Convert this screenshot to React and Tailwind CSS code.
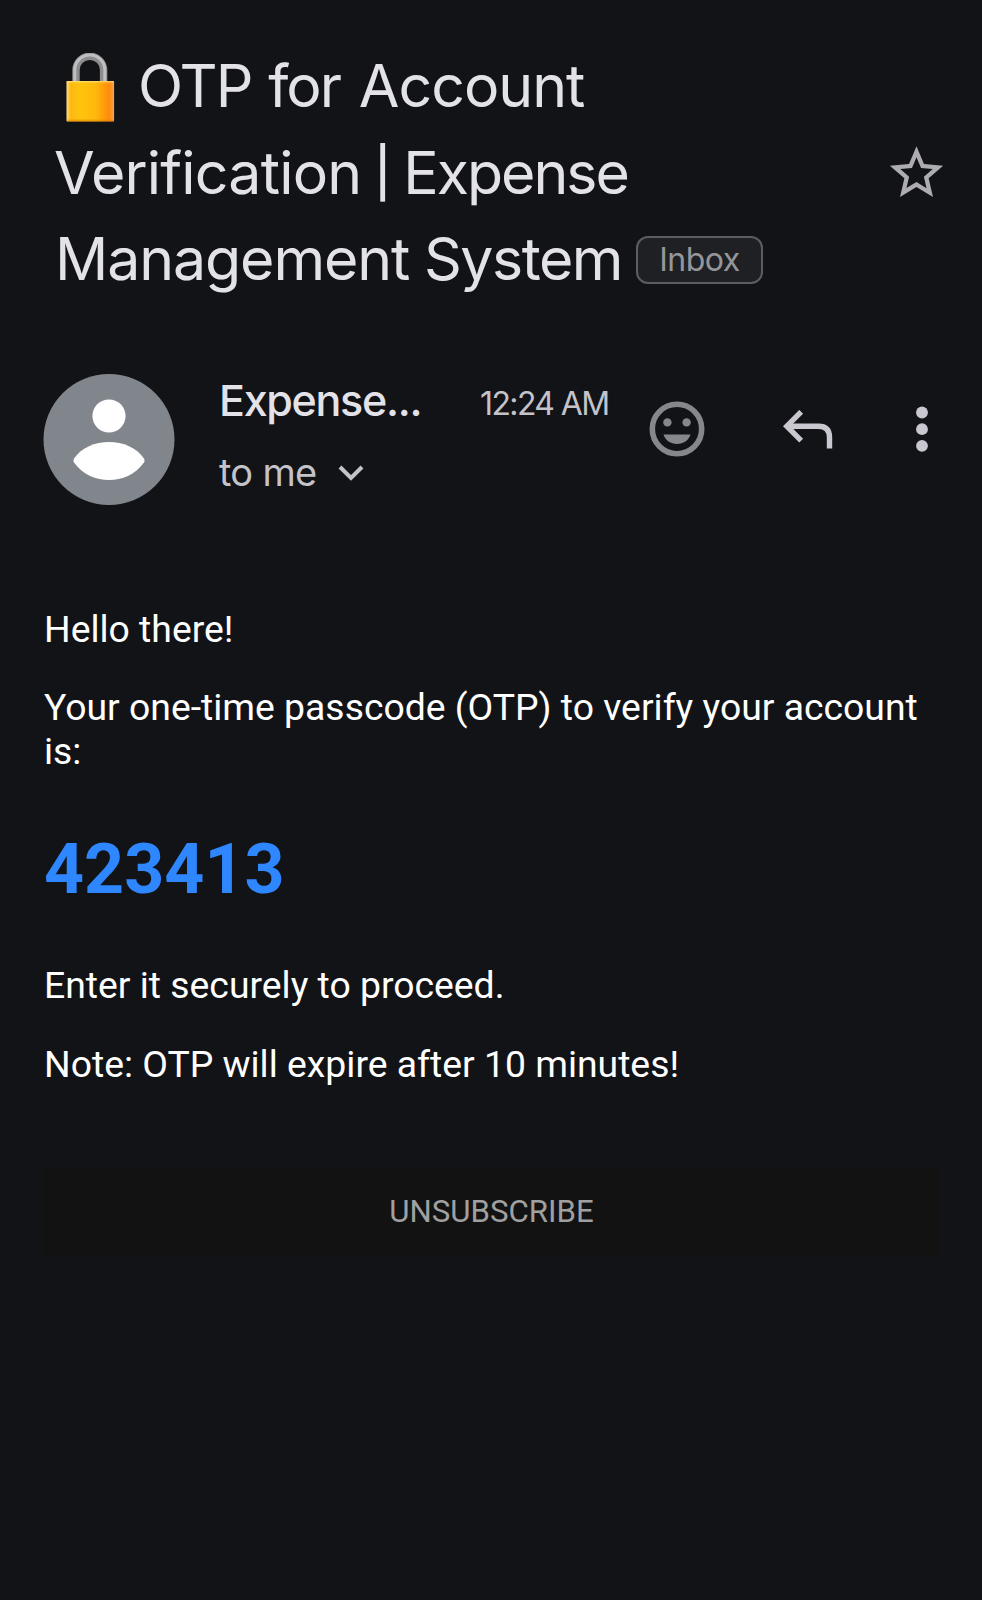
const SANS = "font-['Inter','Roboto',sans-serif]";

function Lock() {
  return (
    <svg className="ml-[10px] mt-[9.500px] h-[70px] w-[49px] shrink-0" viewBox="0 0 49 70">
      <defs>
        <linearGradient id="lockBody" x1="0" x2="1" y1="0" y2="0">
          <stop offset="0" stopColor="#ffe08a" />
          <stop offset="0.08" stopColor="#fcb912" />
          <stop offset="0.3" stopColor="#ffc40d" />
          <stop offset="0.62" stopColor="#ffb80c" />
          <stop offset="0.9" stopColor="#ff8a0a" />
          <stop offset="1" stopColor="#f3a456" />
        </linearGradient>
        <linearGradient id="lockShade" x1="0" x2="0" y1="0" y2="1">
          <stop offset="0" stopColor="#fff0a0" stopOpacity="0.7" />
          <stop offset="0.07" stopColor="#ffd54a" stopOpacity="0" />
          <stop offset="0.92" stopColor="#f08a00" stopOpacity="0" />
          <stop offset="1" stopColor="#c96a00" stopOpacity="0.6" />
        </linearGradient>
      </defs>
      <path d="M10 30V17a13.8 13.8 0 0 1 27.6 0V30" fill="none" stroke="#8d8d8f" strokeWidth="7.4" />
      <path d="M8.8 30V17a15 15 0 0 1 30 0V30" fill="none" stroke="#bfbfc1" strokeWidth="3" />
      <rect x="0.5" y="28" width="47.6" height="40.6" rx="1" fill="url(#lockBody)" />
      <rect x="0.5" y="28" width="47.6" height="40.6" rx="1" fill="url(#lockShade)" />
    </svg>
  );
}

function Subject() {
  return (
    <header className={`flex pt-[43px] pl-[56px] ${SANS}`}>
      <h1 className="flex w-[828px] flex-col text-[59px] leading-[86.5px] whitespace-nowrap text-[#e3e2e8]">
        <span className="flex h-[86.5px]">
          <Lock />
          <span className="ml-[23px] tracking-[-1.9px]">
            OTP <span className="ml-[2px]">for</span> <span className="ml-[4px] tracking-[-1px]">Account</span>
          </span>
        </span>
        <span className="-ml-[2px] flex h-[86.5px] tracking-[-2px]">
          <span className="tracking-[-0.8px]">Verification</span>
          <span className="ml-[13px] h-[86.5px] w-[14px] text-center text-[49px] font-medium tracking-normal">|</span>
          <span className="ml-[15px]">Expense</span>
        </span>
        <span className="flex h-[86.5px] items-center">
          <span className="-ml-px w-[369px] tracking-[-1.1px]">Management</span>
          <span className="w-[212px] tracking-[-1.5px]">System</span>
          <span className="mt-[2px] flex h-[48px] w-[127px] items-center justify-center rounded-[12px] border-[2.5px] border-[#5c5d61] bg-[#1f2024] text-[32px] leading-none tracking-[-0.5px] text-[#95969a]">
            Inbox
          </span>
        </span>
      </h1>
      <svg className="mt-[98px] h-[64px] w-[65px]" viewBox="0 0 24 24" fill="#adadb1">
        <path d="M22 9.24l-7.19-.62L12 2 9.19 8.63 2 9.24l5.46 4.73L5.82 21 12 17.27 18.18 21l-1.63-7.03L22 9.24zM12 15.4l-3.76 2.27 1-4.28-3.32-2.88 4.38-.38L12 6.1l1.71 4.04 4.38.38-3.32 2.88 1 4.28L12 15.4z" />
      </svg>
    </header>
  );
}

function Sender() {
  return (
    <section className={`mt-[71.5px] flex h-[132px] pl-[43px] ${SANS}`}>
      <svg className="h-[132px] w-[132px] shrink-0" viewBox="0 0 132 132">
        <circle cx="66" cy="65.5" r="65.5" fill="#81858c" />
        <circle cx="66" cy="42" r="16.6" fill="#fff" />
        <path d="M31 84.500C38.500 73.500 52 68 66 68s27.500 5.500 35 16.500q1 2 0 4C92 101 79 106 66 106s-26-5-35-17.500q-1-2 0-4z" fill="#fff" />
      </svg>
      <div className="ml-[44px] w-[262px] whitespace-nowrap">
        <div className="h-[52px] text-[43px] leading-[52px] font-medium tracking-[-1.3px] text-[#e3e2e8]">Expense...</div>
        <div className="mt-[23px] flex h-[46px] items-center text-[38px] leading-[46px] text-[#c3c3c9]">
          <span className="w-[119px] tracking-[-0.7px]">to me</span>
          <svg className="mt-[2px] h-[18px] w-[26px]" viewBox="0 0 26 18" fill="none" stroke="#c3c3c9" strokeWidth="4">
            <path d="M2 3l11 11L24 3" />
          </svg>
        </div>
      </div>
      <div className="-ml-px mt-[10px] w-[169px] text-[32px] leading-[40px] tracking-[-1.6px] whitespace-nowrap text-[#c3c3c9]">12:24 AM</div>
      <svg className="mt-[26.500px] h-[56px] w-[56px]" viewBox="0 0 56 56">
        <circle cx="28" cy="28" r="24.7" fill="none" stroke="#85878b" strokeWidth="5.600" />
        <circle cx="18.400" cy="21.400" r="4.200" fill="#85878b" />
        <circle cx="37.600" cy="21.400" r="4.200" fill="#85878b" />
        <path d="M14.500 33.500h27C39.500 39.500 34.500 43 28 43s-11.500-3.500-13.500-9.500z" fill="#85878b" />
      </svg>
      <svg className="mt-[36px] ml-[78px] h-[39px] w-[50px]" viewBox="0 0 50 39" fill="none" stroke="#c9c8d0" strokeWidth="5.400">
        <path d="M18.200 1.800L3.800 16.200l14.400 14.400" />
        <path d="M4 16.200h31.500q11 0 11 11V38.500" />
      </svg>
      <svg className="mt-[32px] ml-[82px] h-[48px] w-[14px]" viewBox="0 0 14 48" fill="#c9c8d0">
        <circle cx="7" cy="6.500" r="5.900" />
        <circle cx="7" cy="23.200" r="5.900" />
        <circle cx="7" cy="39.800" r="5.900" />
      </svg>
    </section>
  );
}

function Message() {
  return (
    <main className="mt-[100.5px] ml-[44px] w-[895px] font-['Roboto',sans-serif] text-[37.33px] leading-[44px] text-white">
      <p className="mb-[34px]">Hello there!</p>
      <p>Your one-time passcode (OTP) to verify your account is:</p>
      <p className="mt-[55px] h-[82px] text-[69.9px] leading-[82px] font-bold text-[#2e87ff]">423413</p>
      <p className="mt-[53.500px]">Enter it securely to proceed.</p>
      <p className="mt-[34.500px]">Note: OTP will expire after 10 minutes!</p>
      <div className="mt-[81px] flex h-[90px] items-center justify-center bg-[#121212] text-[31.2px] leading-[38px] text-[#a0a0a0]">
        UNSUBSCRIBE
      </div>
    </main>
  );
}

export default function App() {
  return (
    <div className="h-[1600px] w-[982px] overflow-hidden bg-[#121317]">
      <Subject />
      <Sender />
      <Message />
    </div>
  );
}
